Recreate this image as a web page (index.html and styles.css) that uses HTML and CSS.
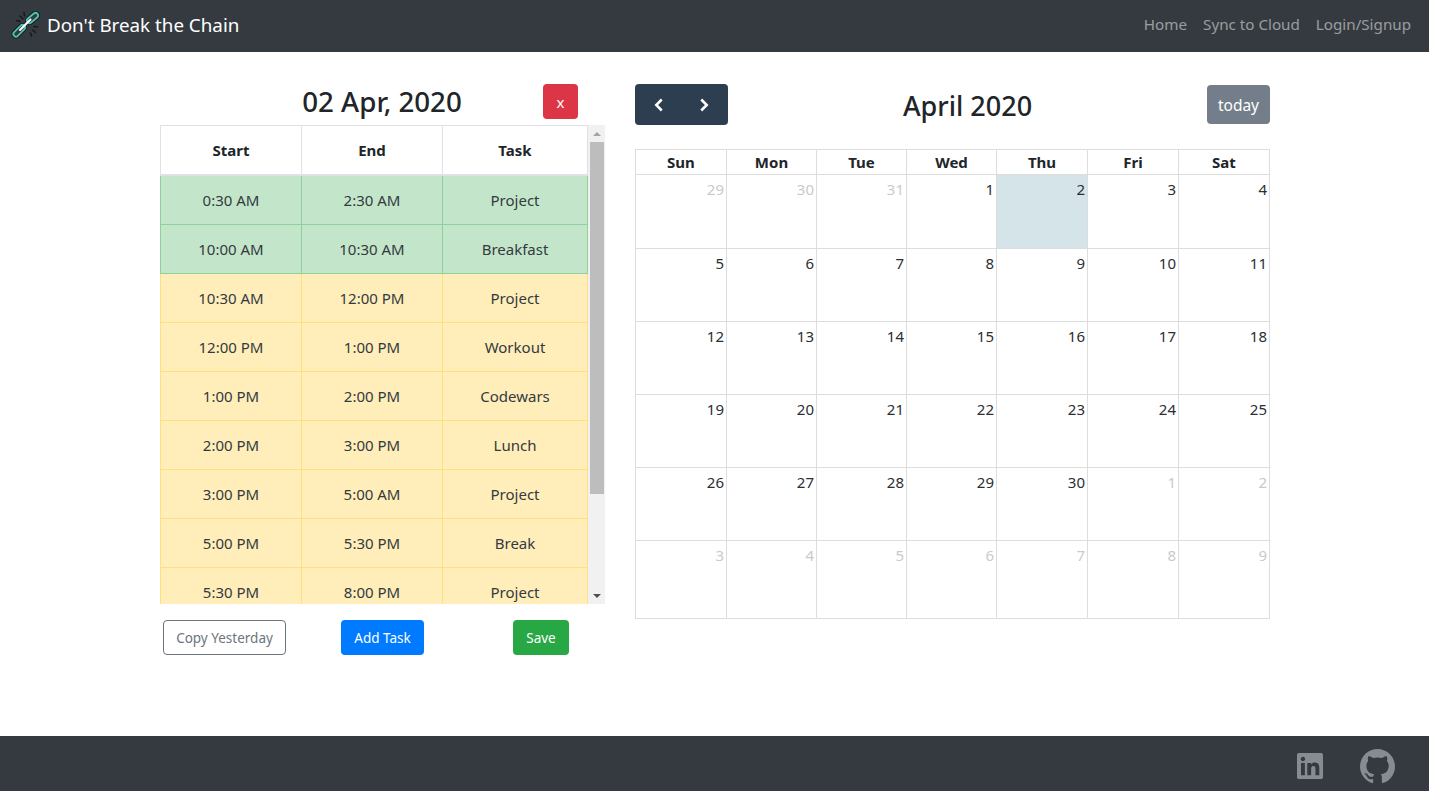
FILE: index.html
```html
<!DOCTYPE html>
<html lang="en">
<head>
    <meta charset="UTF-8">
    <meta name="viewport" content="width=device-width, initial-scale=1.0">
    <title>Don't Break the Chain</title>
    <link rel="stylesheet" href="styles.css">
</head>
<body>
  <nav class="navbar">
    <a class="brand" href="#">
      <svg class="logo" viewBox="0 0 30 30">
        <g fill="none" stroke-linecap="round">
          <path d="M18.500 10.500L24.500 5.500M5 24L11.500 17.500" stroke="#15191c" stroke-width="9"/>
          <path d="M18.500 10.500L24.500 5.500M5 24L11.500 17.500" stroke="#4fc4b4" stroke-width="7"/>
          <path d="M18.500 10.500L24.500 5.500M5 24L11.500 17.500" stroke="#343a40" stroke-width="3.500"/>
          <path d="M9 20L19.500 9.500" stroke="#fff" stroke-width="2"/>
          <path d="M9 6l3 3M5.500 10.500l3.500 1M13 2.500l.5 3.500M21.500 20l3 2.500M19.500 23l1 3M23 16.500l3.500 .5" stroke="#15191c" stroke-width="1.500"/>
        </g>
      </svg>
      Don't Break the Chain
    </a>
    <div class="nav-links">
      <a href="#">Home</a>
      <a href="#">Sync to Cloud</a>
      <a href="#">Login/Signup</a>
    </div>
  </nav>

  <main class="content">
    <section class="day-panel">
      <div class="day-head">
        <h3>02 Apr, 2020</h3>
        <button class="btn btn-red btn-close">x</button>
      </div>
      <div class="task-box">
        <div class="task-scroll">
          <table class="tasks">
            <thead>
              <tr><th>Start</th><th>End</th><th>Task</th></tr>
            </thead>
            <tbody>
              <tr class="done"><td>0:30 AM</td><td>2:30 AM</td><td>Project</td></tr>
              <tr class="done"><td>10:00 AM</td><td>10:30 AM</td><td>Breakfast</td></tr>
              <tr class="todo"><td>10:30 AM</td><td>12:00 PM</td><td>Project</td></tr>
              <tr class="todo"><td>12:00 PM</td><td>1:00 PM</td><td>Workout</td></tr>
              <tr class="todo"><td>1:00 PM</td><td>2:00 PM</td><td>Codewars</td></tr>
              <tr class="todo"><td>2:00 PM</td><td>3:00 PM</td><td>Lunch</td></tr>
              <tr class="todo"><td>3:00 PM</td><td>5:00 AM</td><td>Project</td></tr>
              <tr class="todo"><td>5:00 PM</td><td>5:30 PM</td><td>Break</td></tr>
              <tr class="todo"><td>5:30 PM</td><td>8:00 PM</td><td>Project</td></tr>
            </tbody>
          </table>
        </div>
        <div class="scrollbar">
          <span class="bar-btn"><i class="arrow-up"></i></span>
          <div class="bar-track"><div class="bar-thumb"></div></div>
          <span class="bar-btn"><i class="arrow-down"></i></span>
        </div>
      </div>
      <div class="day-actions">
        <button class="btn btn-outline">Copy Yesterday</button>
        <button class="btn btn-blue">Add Task</button>
        <button class="btn btn-green">Save</button>
      </div>
    </section>

    <section class="calendar">
      <div class="cal-toolbar">
        <div class="cal-nav">
          <button class="cal-arrow">
            <svg viewBox="0 0 16 16"><path d="M11.750 2.500L6.250 8l5.500 5.500"/></svg>
          </button>
          <button class="cal-arrow">
            <svg viewBox="0 0 16 16"><path d="M4.250 2.500L9.750 8l-5.500 5.500"/></svg>
          </button>
        </div>
        <h2>April 2020</h2>
        <button class="cal-today">today</button>
      </div>
      <table class="month">
        <thead>
          <tr><th>Sun</th><th>Mon</th><th>Tue</th><th>Wed</th><th>Thu</th><th>Fri</th><th>Sat</th></tr>
        </thead>
        <tbody>
          <tr>
            <td class="other">29</td><td class="other">30</td><td class="other">31</td><td>1</td><td class="today">2</td><td>3</td><td>4</td>
          </tr>
          <tr><td>5</td><td>6</td><td>7</td><td>8</td><td>9</td><td>10</td><td>11</td></tr>
          <tr><td>12</td><td>13</td><td>14</td><td>15</td><td>16</td><td>17</td><td>18</td></tr>
          <tr><td>19</td><td>20</td><td>21</td><td>22</td><td>23</td><td>24</td><td>25</td></tr>
          <tr>
            <td>26</td><td>27</td><td>28</td><td>29</td><td>30</td><td class="other">1</td><td class="other">2</td>
          </tr>
          <tr class="last">
            <td class="other">3</td><td class="other">4</td><td class="other">5</td><td class="other">6</td><td class="other">7</td><td class="other">8</td><td class="other">9</td>
          </tr>
        </tbody>
      </table>
    </section>
  </main>

  <footer class="footer">
    <a href="#" class="social linkedin">
      <svg viewBox="0 0 448 512"><path d="M416 32H31.900C14.300 32 0 46.500 0 64.300v383.400C0 465.500 14.300 480 31.900 480H416c17.600 0 32-14.500 32-32.300V64.300c0-17.800-14.400-32.300-32-32.300zM135.400 416H69V202.200h66.500V416zm-33.200-243c-21.300 0-38.500-17.300-38.500-38.500S80.900 96 102.200 96c21.200 0 38.500 17.300 38.500 38.500 0 21.300-17.200 38.500-38.500 38.500zm282.100 243h-66.400V312c0-24.800-.5-56.700-34.500-56.700-34.600 0-39.900 27-39.900 54.900V416h-66.400V202.200h63.700v29.200h.9c8.900-16.800 30.600-34.500 62.900-34.500 67.200 0 79.700 44.300 79.700 101.900V416z"/></svg>
    </a>
    <a href="#" class="social github">
      <svg viewBox="0 0 16 16"><path d="M8 0C3.580 0 0 3.580 0 8c0 3.540 2.290 6.530 5.470 7.590.4.070.55-.17.55-.38 0-.19-.01-.82-.01-1.490-2.010.37-2.530-.49-2.690-.94-.09-.23-.48-.94-.82-1.130-.28-.15-.68-.52-.01-.53.63-.01 1.080.58 1.230.82.72 1.210 1.870.87 2.330.66.070-.52.28-.87.51-1.070-1.780-.2-3.640-.89-3.640-3.950 0-.87.31-1.590.82-2.150-.08-.2-.36-1.020.08-2.120 0 0 .67-.21 2.200.82.64-.18 1.320-.27 2-.27.68 0 1.360.09 2 .27 1.530-1.040 2.200-.82 2.200-.82.44 1.100.16 1.920.08 2.120.51.56.82 1.270.82 2.150 0 3.070-1.870 3.750-3.650 3.950.29.25.54.73.54 1.480 0 1.070-.01 1.930-.01 2.200 0 .21.15.46.55.38A8.013 8.013 0 0016 8c0-4.420-3.580-8-8-8z"/></svg>
    </a>
  </footer>
</body>
</html>
```

FILE: styles.css
```css
* {
  box-sizing: border-box;
}
body, html {
  height: 100%;
  margin: 0;
}
body {
  display: flex;
  flex-direction: column;
  font-family: 'Noto Sans', 'Open Sans', sans-serif;
  font-size: 15px;
  line-height: 24px;
  color: #212529;
  background-color: #fff;
}
a {
  text-decoration: none;
}
button {
  font-family: inherit;
  border: none;
  cursor: pointer;
}

/* navbar */
.navbar {
  height: 52px;
  flex: none;
  display: flex;
  align-items: center;
  justify-content: space-between;
  padding: 0 18px 0 11px;
  background-color: #343a40;
}
.brand {
  display: flex;
  align-items: center;
  gap: 6px;
  padding-bottom: 2px;
  color: #fff;
  font-size: 18.800px;
}
.logo {
  width: 30px;
  height: 30px;
}
.nav-links {
  display: flex;
  gap: 16px;
  padding-bottom: 4px;
}
.nav-links a {
  color: rgba(255,255,255,0.5);
  font-size: 15.200px;
}

/* main area */
.content {
  flex: 1;
  display: flex;
  align-items: flex-start;
  gap: 30px;
  padding: 32px 0 0 160px;
}
.day-panel {
  width: 445px;
}
.day-head {
  height: 41px;
  display: grid;
  grid-template-columns: 1fr auto;
  align-items: start;
}
.day-head h3 {
  grid-column: 1 / 3;
  grid-row: 1;
  margin: 0 1px 0 0;
  font-size: 27.700px;
  line-height: 34px;
  font-weight: 500;
  text-align: center;
}
.btn-close {
  grid-column: 2;
  grid-row: 1;
  width: 35px;
  margin-right: 27px;
}
.btn {
  border-radius: 4px;
  font-size: 13.500px;
  color: #fff;
  height: 35px;
}
.btn-red { background-color: #dc3545; font-size: 15px; }
.btn-blue { background-color: #007bff; width: 83px; }
.btn-green { background-color: #28a745; width: 56px; }
.btn-outline {
  width: 123px;
  background: #fff;
  color: #6c757d;
  border: 1px solid #6c757d;
}

/* task table */
.task-box {
  display: flex;
  height: 479px;
}
.task-scroll {
  width: 428px;
  overflow: hidden;
}
.tasks {
  width: 428px;
  border-collapse: collapse;
  table-layout: fixed;
}
.tasks th:nth-child(1), .tasks th:nth-child(2) {
  width: 141px;
}
.tasks th, .tasks td {
  padding: 12px;
  text-align: center;
  border: 1px solid #dee2e6;
}
.tasks th {
  font-weight: 700;
  border-bottom-width: 2px;
}
.tasks tbody tr:first-child td {
  border-top: 0;
}
.done td {
  background-color: #c3e6cb;
  border-color: #8fd19e;
}
.todo td {
  background-color: #ffeeba;
  border-color: #ffdf7e;
}
.done td, .todo td {
  color: #343a3e;
}
.day-actions {
  display: grid;
  grid-template-columns: 129px 187px 130px;
  justify-items: center;
  margin-top: 16px;
}

/* scrollbar, the screenshot shows the windows one */
.scrollbar {
  width: 17px;
  display: flex;
  flex-direction: column;
  background-color: #f1f1f1;
}
.bar-btn {
  height: 17px;
  flex: none;
  display: flex;
  align-items: center;
  justify-content: center;
}
.arrow-up {
  border-left: 4px solid transparent;
  border-right: 4px solid transparent;
  border-bottom: 4px solid #a3a3a3;
}
.arrow-down {
  border-left: 4px solid transparent;
  border-right: 4px solid transparent;
  border-top: 4px solid #505050;
}
.bar-track {
  flex: 1;
  padding: 0 1px 0 2px;
}
.bar-thumb {
  height: 352px;
  background-color: #bdbdbd;
}

/* calendar */
.calendar {
  width: 635px;
}
.cal-toolbar {
  display: flex;
  justify-content: space-between;
  align-items: center;
  height: 41px;
  margin-bottom: 24px;
}
.cal-toolbar h2 {
  margin: 2px 0 0;
  font-size: 27px;
  line-height: 40px;
  font-weight: 500;
}
.cal-nav {
  display: flex;
  width: 93px;
  height: 41px;
  background-color: #2c3e50;
  border-radius: 4px;
  overflow: hidden;
}
.cal-arrow {
  flex: 1;
  padding: 0;
  background: none;
  display: flex;
  align-items: center;
  justify-content: center;
}
.cal-arrow svg {
  width: 16px;
  height: 16px;
  fill: none;
  stroke: #fff;
  stroke-width: 2.500;
}
.cal-today {
  width: 63px;
  height: 39px;
  padding: 0;
  background-color: #737e8a;
  color: #fff;
  font-size: 15.500px;
  border-radius: 4px;
}
.month {
  width: 635px;
  border-collapse: collapse;
  table-layout: fixed;
}
.month th:nth-child(1), .month th:nth-child(5) {
  width: 91px;
}
.month th:nth-child(2), .month th:nth-child(3), .month th:nth-child(4) {
  width: 90px;
}
.month th:nth-child(6), .month th:nth-child(7) {
  width: 91px;
}
.month th, .month td {
  border: 1px solid #ddd;
}
.month th {
  height: 25px;
  padding: 0;
  font-weight: 700;
  text-align: center;
  line-height: 24px;
}
.month td {
  height: 73px;
  padding: 2px 2px 0 0;
  text-align: right;
  vertical-align: top;
  color: #2b2f33;
}
.month tbody tr:first-child td {
  height: 74px;
}
.month .last td {
  height: 78px;
}
.month td.other {
  color: #c9cacb;
}
.month td.today {
  background-color: #d4e4e9;
}

/* footer */
.footer {
  height: 55px;
  flex: none;
  display: flex;
  align-items: center;
  justify-content: flex-end;
  gap: 37px;
  padding: 6px 34px 0 0;
  background-color: #343a40;
}
.social {
  display: flex;
}
.social svg {
  fill: #868c92;
}
.linkedin {
  margin-bottom: 2px;
}
.linkedin svg {
  width: 26px;
  height: 30px;
}
.github svg {
  width: 35px;
  height: 35px;
}
```
